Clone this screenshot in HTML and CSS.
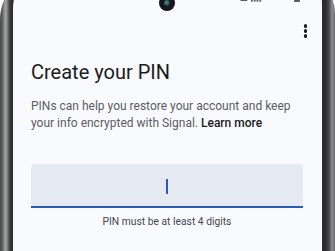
FILE: index.html
```html
<!DOCTYPE html>
<html>
<head>
<meta charset="utf-8">
<link rel="stylesheet" href="styles.css">
</head>
<body>
<div class="phone">
  <div class="screen">
    <div class="camera"><span class="lens"></span></div>
    <div class="status">
      <span class="time">9:52</span>
      <span class="icons">
        <svg class="ico" width="9" height="9" viewBox="0 0 10 10"><path d="M1 9 L9 1 L9 9 Z" fill="#5b5d62"/></svg>
        <svg class="ico" width="13" height="10" viewBox="0 0 14 10"><rect x="0" y="6" width="2" height="4" fill="#5b5d62"/><rect x="3" y="4" width="2" height="6" fill="#5b5d62"/><rect x="6" y="2" width="2" height="8" fill="#5b5d62"/><rect x="9" y="0" width="2" height="10" fill="#5b5d62"/></svg>
        <span class="pct">66%</span>
        <span class="batt"></span>
      </span>
    </div>
    <div class="toolbar">
      <span class="kebab"><i></i><i></i><i></i></span>
    </div>
    <div class="content">
      <h1 class="title">Create your PIN</h1>
      <p class="desc">PINs can help you restore your account and keep your info encrypted with Signal. <span class="link">Learn more</span></p>
      <div class="field">
        <span class="cursor"></span>
      </div>
      <p class="helper">PIN must be at least 4 digits</p>
    </div>
  </div>
</div>
</body>
</html>
```

FILE: styles.css
```css
html, body {
  margin: 0;
  padding: 0;
}
body {
  width: 335px;
  height: 251px;
  overflow: hidden;
  background: #ffffff;
  font-family: Roboto, "Noto Sans", sans-serif;
}
.phone {
  margin-top: -30px;
  width: 335px;
  height: 281px;
  box-sizing: border-box;
  padding: 0 13px 0 13px;
  border-radius: 50px 44px 0 0;
  background:
    linear-gradient(to right, #4d4d4d 0, #585858 2px, #8a8a8a 4px, #a5a5a5 6px, #6a6a6a 8px, #3a3a3a 10px, #2a2a2a 13px, transparent 13px),
    linear-gradient(to left, #6a6a6a 0, #8e8e8e 3px, #4a4a4a 6px, #2f2f2f 9px, #2a2a2a 13px, transparent 13px);
  background-color: #2a2a2a;
}
.screen {
  position: relative;
  height: 100%;
  background: #f9fafe;
  border-radius: 38px 34px 0 0;
  overflow: hidden;
}
.camera {
  position: absolute;
  left: 146px;
  top: 25px;
  width: 16px;
  height: 16px;
  border-radius: 50%;
  background: #16191c;
  display: flex;
  align-items: center;
  justify-content: center;
}
.lens {
  width: 6px;
  height: 6px;
  border-radius: 50%;
  background: radial-gradient(circle at 40% 40%, #4f8f95 0, #1d3a3f 70%);
}
.status {
  height: 33px;
  display: flex;
  align-items: flex-end;
  justify-content: space-between;
  padding: 0 22px 0 17px;
  font-size: 12px;
  line-height: 12px;
  color: #5b5d62;
}
.time {
  display: block;
  transform: translateY(-1px);
}
.icons {
  display: flex;
  align-items: flex-end;
  gap: 3px;
  transform: translateY(-1px);
}
.ico {
  display: block;
}
.pct {
  margin-left: 2px;
}
.batt {
  width: 6px;
  height: 10px;
  background: #5b5d62;
  border-radius: 1px;
}
.toolbar {
  height: 55px;
  box-sizing: border-box;
  display: flex;
  justify-content: flex-end;
  align-items: flex-start;
  padding: 21px 15px 0 0;
}
.kebab {
  display: flex;
  flex-direction: column;
  gap: 1.5px;
}
.kebab i {
  display: block;
  width: 3.5px;
  height: 3.5px;
  border-radius: 50%;
  background: #1b1c1f;
}
.content {
  padding: 0 19px 0 18px;
}
.title {
  margin: 0;
  font-size: 20px;
  line-height: 28px;
  font-weight: 400;
  color: #1b1b1e;
}
.desc {
  margin: 12px 0 0 0;
  font-size: 12px;
  line-height: 17px;
  color: #5a5c62;
}
.link {
  color: #1b1c1f;
  font-weight: 500;
}
.field {
  margin-top: 32px;
  height: 42px;
  background: #e5e9f2;
  border-radius: 4px 4px 0 0;
  border-bottom: 2px solid #2d5bb4;
  display: flex;
  align-items: center;
  justify-content: center;
}
.cursor {
  display: block;
  width: 2px;
  height: 15px;
  margin-top: 2px;
  background: #2d5bb4;
}
.helper {
  margin: 7px 0 0 0;
  text-align: center;
  font-size: 10.3px;
  line-height: 14px;
  color: #45474c;
}
```
